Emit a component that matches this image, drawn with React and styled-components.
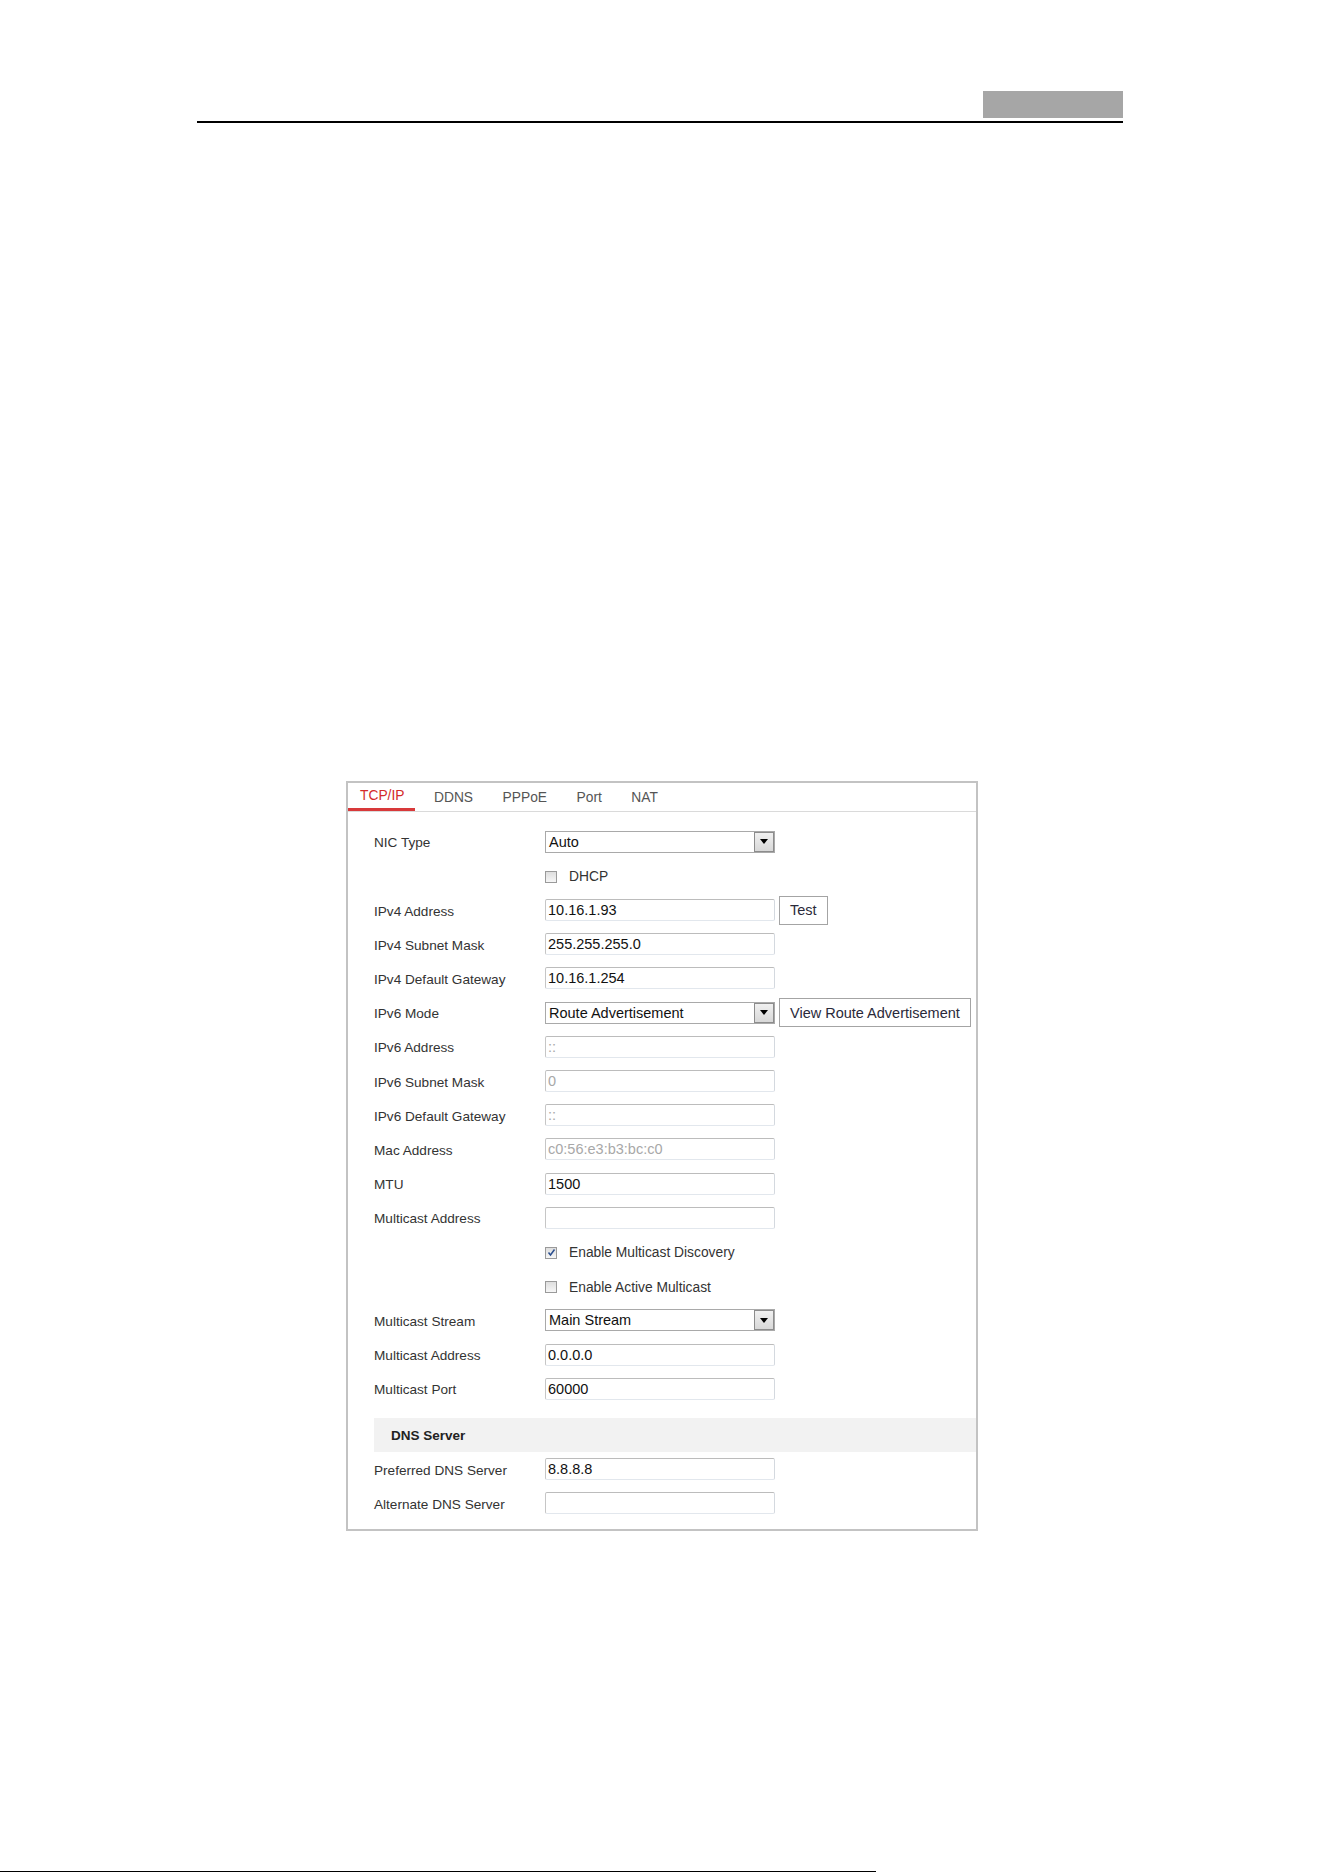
import styled, { createGlobalStyle } from 'styled-components';

const GlobalStyle = createGlobalStyle`
  html, body {
    margin: 0;
    padding: 0;
    background: #fff;
  }
  body {
    font-family: "Liberation Sans", Arial, sans-serif;
  }
`;

const Page = styled.div`
  width: 1324px;
  height: 1872px;
  overflow: hidden;
  display: flex;
  flex-direction: column;
`;

const Header = styled.div`
  margin: 91px 0 0 197px;
  width: 926px;
  display: flex;
  flex-direction: column;
  align-items: flex-end;
`;

const HeaderTag = styled.div`
  width: 140px;
  height: 27px;
  background: #a6a6a6;
`;

const HeaderRule = styled.div`
  margin-top: 3px;
  align-self: stretch;
  height: 2px;
  background: #000;
`;

const Panel = styled.div`
  margin: 658px 0 0 346px;
  width: 632px;
  box-sizing: border-box;
  border: 2px solid #c3c3c3;
  background: #fff;
`;

const Tabs = styled.div`
  display: flex;
  gap: 6.5px;
  height: 28px;
  border-bottom: 1px solid #dadada;
`;

const Tab = styled.div`
  box-sizing: border-box;
  height: 28px;
  padding: 0 11px 0 12px;
  display: flex;
  align-items: center;
  font-size: 13.8px;
  color: ${({ $active }) => ($active ? '#d42a2a' : '#555')};
  border-bottom: ${({ $active }) => ($active ? '3px solid #d8393a' : 'none')};
`;

const Body = styled.div`
  padding: 12.6px 0 8.5px 26px;
  display: flex;
  flex-direction: column;
`;

const Row = styled.div`
  height: 34.2px;
  display: flex;
  align-items: center;
`;

const Label = styled.div`
  width: 171px;
  flex-shrink: 0;
  padding-top: 2px;
  font-size: 13.6px;
  color: #333;
`;

const Field = styled.input`
  box-sizing: border-box;
  width: 230px;
  height: 22px;
  margin: 0;
  padding: 0 2px;
  border: 1px solid;
  border-color: #bcbcbc #d4d9df #e2e7ed #c6c6c6;
  border-radius: 2px;
  background: #fff;
  font-family: "Liberation Sans", Arial, sans-serif;
  font-size: 14.5px;
  color: ${({ $muted }) => ($muted ? '#a8a8a8' : '#111')};
  outline: none;
`;

const Select = styled.div`
  box-sizing: border-box;
  width: 230px;
  height: 22px;
  display: flex;
  align-items: center;
  border: 1px solid #a9a9a9;
  background: #fff;
`;

const SelectText = styled.div`
  flex: 1;
  padding-left: 3px;
  font-size: 14.5px;
  color: #111;
`;

const SelectArrow = styled.div`
  box-sizing: border-box;
  width: 20px;
  height: 20px;
  display: flex;
  align-items: center;
  justify-content: center;
  border: 1px solid #8c8c8c;
  background: linear-gradient(#f0f0f0, #d8d8d8);
`;

const Button = styled.div`
  box-sizing: border-box;
  margin-left: 4px;
  height: 29px;
  padding: 0 10px;
  display: flex;
  align-items: center;
  border: 1px solid #a4a4a4;
  background: #fff;
  font-size: 14.5px;
  color: #2a2a3a;
  white-space: nowrap;
`;

const CheckLine = styled.label`
  margin-left: 171px;
  display: flex;
  align-items: center;
  gap: 12px;
  font-size: 13.8px;
  color: #333;
`;

const CheckText = styled.span`
  padding-top: 2px;
`;

const Box = styled.span`
  box-sizing: border-box;
  width: 12px;
  height: 12px;
  margin-top: 2px;
  display: flex;
  align-items: center;
  justify-content: center;
  border: 1px solid #9a9a9a;
  background: linear-gradient(#dedede, #f6f6f6);
`;

const Section = styled.div`
  margin-top: 12px;
  height: 34.3px;
  display: flex;
  align-items: center;
  padding: 2px 0 0 17px;
  box-sizing: border-box;
  background: #f2f2f2;
  font-size: 13.5px;
  font-weight: bold;
  color: #222;
`;

const Footer = styled.div`
  margin-top: 340px;
  width: 876px;
  height: 2px;
  background: #000;
`;

const tabs = ['TCP/IP', 'DDNS', 'PPPoE', 'Port', 'NAT'];

const rows = [
  { label: 'NIC Type', select: 'Auto' },
  { check: 'DHCP' },
  { label: 'IPv4 Address', value: '10.16.1.93', button: 'Test' },
  { label: 'IPv4 Subnet Mask', value: '255.255.255.0' },
  { label: 'IPv4 Default Gateway', value: '10.16.1.254' },
  { label: 'IPv6 Mode', select: 'Route Advertisement', button: 'View Route Advertisement' },
  { label: 'IPv6 Address', value: '::', muted: true },
  { label: 'IPv6 Subnet Mask', value: '0', muted: true },
  { label: 'IPv6 Default Gateway', value: '::', muted: true },
  { label: 'Mac Address', value: 'c0:56:e3:b3:bc:c0', muted: true },
  { label: 'MTU', value: '1500' },
  { label: 'Multicast Address', value: '' },
  { check: 'Enable Multicast Discovery', checked: true },
  { check: 'Enable Active Multicast' },
  { label: 'Multicast Stream', select: 'Main Stream' },
  { label: 'Multicast Address', value: '0.0.0.0' },
  { label: 'Multicast Port', value: '60000' },
];

const dns = [
  { label: 'Preferred DNS Server', value: '8.8.8.8' },
  { label: 'Alternate DNS Server', value: '' },
];

function Arrow() {
  return (
    <svg width="8" height="5" viewBox="0 0 8 5">
      <path d="M0 0h8L4 5z" fill="#000" />
    </svg>
  );
}

function Tick() {
  return (
    <svg width="9" height="9" viewBox="0 0 9 9">
      <path d="M1.5 4.5l2 2.5 4-5.5" fill="none" stroke="#2b4f8f" strokeWidth="1.5" />
    </svg>
  );
}

function FormRow({ row }) {
  if (row.check) {
    return (
      <Row>
        <CheckLine>
          <Box>{row.checked && <Tick />}</Box>
          <CheckText>{row.check}</CheckText>
        </CheckLine>
      </Row>
    );
  }
  return (
    <Row>
      <Label>{row.label}</Label>
      {row.select ? (
        <Select>
          <SelectText>{row.select}</SelectText>
          <SelectArrow><Arrow /></SelectArrow>
        </Select>
      ) : (
        <Field readOnly value={row.value} $muted={row.muted} />
      )}
      {row.button && <Button>{row.button}</Button>}
    </Row>
  );
}

export default function App() {
  return (
    <Page>
      <GlobalStyle />
      <Header>
        <HeaderTag />
        <HeaderRule />
      </Header>
      <Panel>
        <Tabs>
          {tabs.map((t, i) => (
            <Tab key={t} $active={i === 0}>{t}</Tab>
          ))}
        </Tabs>
        <Body>
          {rows.map((r, i) => (
            <FormRow key={i} row={r} />
          ))}
          <Section>DNS Server</Section>
          {dns.map((r, i) => (
            <FormRow key={i} row={r} />
          ))}
        </Body>
      </Panel>
      <Footer />
    </Page>
  );
}
